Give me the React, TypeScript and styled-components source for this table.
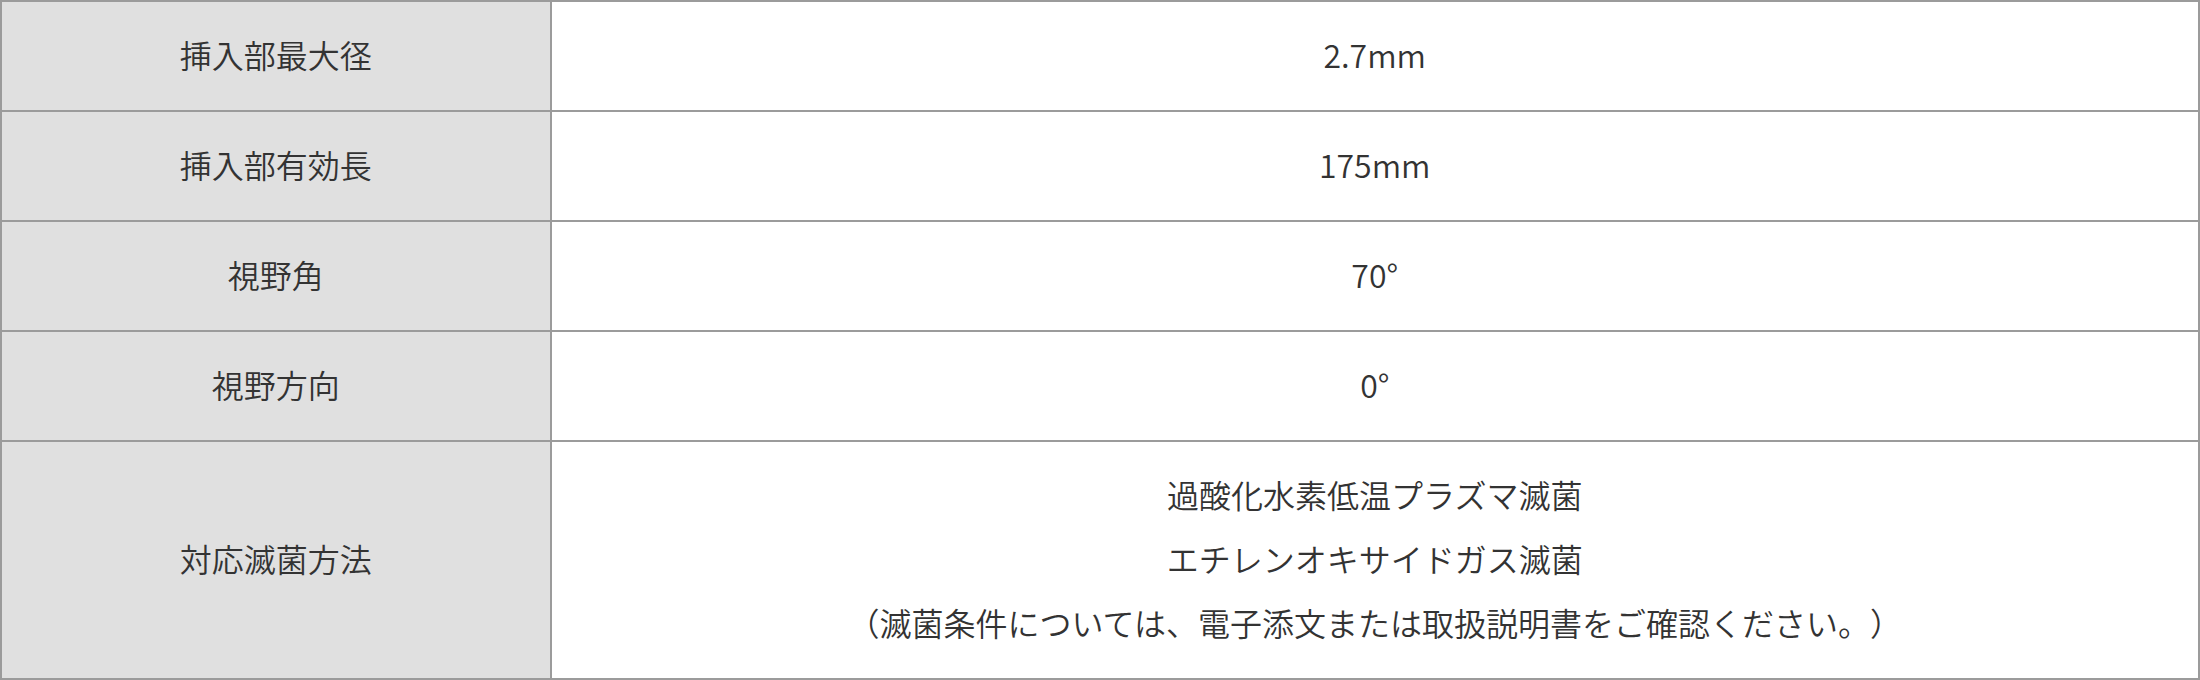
import React from 'react';
import styled, { createGlobalStyle } from 'styled-components';

const GlobalStyle = createGlobalStyle`
  html, body {
    margin: 0;
    padding: 0;
    background: #fff;
  }
  body {
    font-family: "Noto Sans CJK JP", "Noto Sans", sans-serif;
    color: #333;
  }
`;

const SpecTable = styled.table`
  width: 100%;
  border-collapse: collapse;
  table-layout: fixed;
  font-size: 32px;
  line-height: 64px;
  font-weight: 350;
  text-spacing-trim: space-all;
`;

const HeadCell = styled.th`
  box-sizing: border-box;
  width: 25%;
  background: #e0e0e0;
  border: 2px solid #9b9b9b;
  padding: 20px 16px 24px;
  font-weight: 350;
  text-align: center;
  vertical-align: middle;
`;

const ValueCell = styled.td`
  background: #fff;
  border: 2px solid #9b9b9b;
  padding: 20px 16px 24px;
  text-align: center;
  vertical-align: middle;
`;

const Line = styled.div`
  display: block;
`;

interface ISpecRow {
  label: string;
  values: string[];
}

const specRows: ISpecRow[] = [
  { label: '挿入部最大径', values: ['2.7mm'] },
  { label: '挿入部有効長', values: ['175mm'] },
  { label: '視野角', values: ['70°'] },
  { label: '視野方向', values: ['0°'] },
  {
    label: '対応滅菌方法',
    values: [
      '過酸化水素低温プラズマ滅菌',
      'エチレンオキサイドガス滅菌',
      '（滅菌条件については、電子添文または取扱説明書をご確認ください。）',
    ],
  },
];

const App: React.FC = () => {
  return (
    <>
      <GlobalStyle />
      <SpecTable>
        <tbody>
          {specRows.map((row) => (
            <tr key={row.label}>
              <HeadCell>{row.label}</HeadCell>
              <ValueCell>
                {row.values.map((v) => (
                  <Line key={v}>{v}</Line>
                ))}
              </ValueCell>
            </tr>
          ))}
        </tbody>
      </SpecTable>
    </>
  );
};

export default App;
